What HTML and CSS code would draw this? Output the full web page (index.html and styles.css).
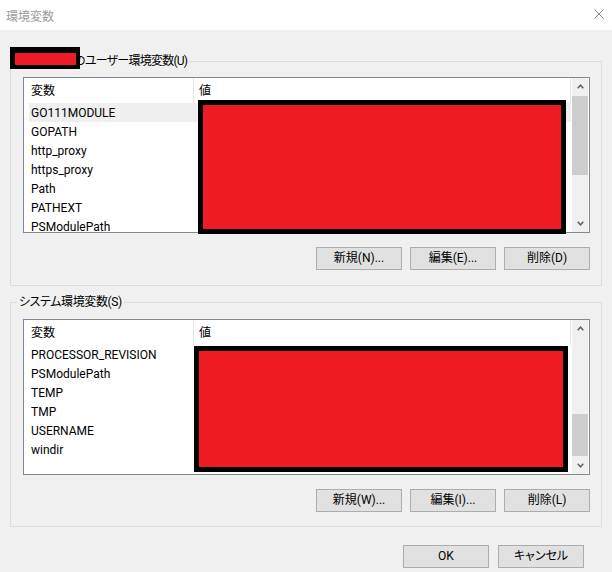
FILE: index.html
```html
<!DOCTYPE html>
<html lang="ja">
<head>
<meta charset="utf-8">
<title>環境変数</title>
<link rel="stylesheet" href="styles.css">
</head>
<body>
<div class="titlebar">
  <span class="title">環境変数</span>
  <svg class="close" width="10" height="10" viewBox="0 0 10 10"><path d="M0.5 0.5 L9.5 9.5 M9.5 0.5 L0.5 9.5" stroke="#8a8a8a" stroke-width="1" fill="none"/></svg>
</div>
<div class="content">
  <fieldset class="group group-user">
    <legend class="legend legend-user"><span class="user-space"></span><span class="redact redact-user"></span>のユーザー環境変数(U)</legend>
    <div class="list">
      <div class="list-main">
        <div class="list-head"><div class="head-cell head-name">変数</div><div class="head-cell head-value">値</div></div>
        <div class="rows">
          <div class="row selected">GO111MODULE</div>
          <div class="row">GOPATH</div>
          <div class="row">http_proxy</div>
          <div class="row">https_proxy</div>
          <div class="row">Path</div>
          <div class="row">PATHEXT</div>
          <div class="row">PSModulePath</div>
        </div>
      </div>
      <div class="scrollbar">
        <div class="sb-btn"><svg width="7" height="5" viewBox="0 0 7 5"><polyline points="0.7,4.2 3.5,1.2 6.3,4.2" fill="none" stroke="#606060" stroke-width="1.5"/></svg></div>
        <div class="sb-track"><div class="sb-thumb" style="margin-top:1px;height:79px"></div></div>
        <div class="sb-btn"><svg width="7" height="5" viewBox="0 0 7 5"><polyline points="0.7,0.8 3.5,3.8 6.3,0.8" fill="none" stroke="#606060" stroke-width="1.5"/></svg></div>
      </div>
      <div class="redact redact-values-user"></div>
    </div>
    <div class="btn-row">
      <button class="btn">新規(N)...</button>
      <button class="btn">編集(E)...</button>
      <button class="btn">削除(D)</button>
    </div>
  </fieldset>

  <fieldset class="group group-system">
    <legend class="legend">システム環境変数(S)</legend>
    <div class="list">
      <div class="list-main">
        <div class="list-head"><div class="head-cell head-name">変数</div><div class="head-cell head-value">値</div></div>
        <div class="rows">
          <div class="row">PROCESSOR_REVISION</div>
          <div class="row">PSModulePath</div>
          <div class="row">TEMP</div>
          <div class="row">TMP</div>
          <div class="row">USERNAME</div>
          <div class="row">windir</div>
        </div>
      </div>
      <div class="scrollbar">
        <div class="sb-btn"><svg width="7" height="5" viewBox="0 0 7 5"><polyline points="0.7,4.2 3.5,1.2 6.3,4.2" fill="none" stroke="#606060" stroke-width="1.5"/></svg></div>
        <div class="sb-track"><div class="sb-thumb" style="margin-top:77px;height:42px"></div></div>
        <div class="sb-btn"><svg width="7" height="5" viewBox="0 0 7 5"><polyline points="0.7,0.8 3.5,3.8 6.3,0.8" fill="none" stroke="#606060" stroke-width="1.5"/></svg></div>
      </div>
      <div class="redact redact-values-system"></div>
    </div>
    <div class="btn-row">
      <button class="btn">新規(W)...</button>
      <button class="btn">編集(I)...</button>
      <button class="btn">削除(L)</button>
    </div>
  </fieldset>

  <div class="dialog-buttons">
    <button class="btn">OK</button>
    <button class="btn">キャンセル</button>
  </div>
</div>
</body>
</html>
```

FILE: styles.css
```css
* { box-sizing: border-box; }
html, body { margin: 0; padding: 0; }
body {
  width: 612px;
  height: 572px;
  overflow: hidden;
  background: #f0f0f0;
  font-family: Roboto, "Noto Sans CJK JP", sans-serif;
  font-size: 12px;
  color: #000;
  font-feature-settings: "palt";
}
.titlebar {
  height: 30px;
  background: #fff;
  display: flex;
  align-items: center;
  justify-content: space-between;
  padding: 0 8px 0 6px;
}
.title {
  color: #9c9c9c;
  font-family: "Noto Sans CJK JP", sans-serif;
  font-size: 12px;
}
.close { margin-top: -2px; }
.content { padding-top: 23px; }

.group {
  margin: 0 10px;
  border: 1px solid #dcdcdc;
  padding: 8px 11px 15px 12px;
  min-width: 0;
}
.group-system {
  margin-top: 8px;
  padding: 9px 11px 14px 12px;
}
.legend {
  position: relative;
  padding: 0 2px;
  margin-left: -6px;
  line-height: 16px;
  height: 16px;
  letter-spacing: -0.4px;
}
.legend-user { letter-spacing: -0.75px; }
.user-space {
  display: inline-block;
  width: 55px;
  height: 1px;
}
.redact {
  position: absolute;
  background: #ed1c24;
  border: 5px solid #000;
}
.redact-user {
  left: -7px;
  top: -6px;
  width: 70px;
  height: 22px;
  border-width: 6px 4px 4px 5px;
}
.list {
  position: relative;
  height: 156px;
  border: 1px solid #828790;
  background: #fff;
  display: flex;
}
.list-main {
  flex: 1;
  min-width: 0;
  display: flex;
  flex-direction: column;
  overflow: hidden;
}
.list-head {
  height: 25px;
  display: flex;
  flex-shrink: 0;
}
.head-cell {
  padding-top: 1px;
  line-height: 24px;
  border-right: 1px solid #e5e5e5;
}
.head-name { width: 170px; padding-left: 7px; }
.head-value { flex: 1; padding-left: 5px; }
.rows { padding-left: 5px; }
.row {
  height: 19px;
  padding-top: 2px;
  padding-left: 2px;
  line-height: 17px;
  white-space: nowrap;
}
.row.selected { background: #efefef; }

.scrollbar {
  width: 16px;
  margin: 0 1px;
  background: #f0f0f0;
  display: flex;
  flex-direction: column;
}
.sb-btn {
  height: 17px;
  flex-shrink: 0;
  display: flex;
  align-items: center;
  justify-content: center;
}
.sb-btn svg { display: block; }
.sb-track { flex: 1; }
.sb-thumb { background: #cdcdcd; }

.redact-values-user { left: 174px; top: 22px; width: 368px; height: 134px; }
.redact-values-system { left: 170px; top: 26px; width: 374px; height: 126px; }

.btn-row {
  display: flex;
  justify-content: flex-end;
  gap: 8px;
  margin-top: 14px;
}
.btn {
  width: 86px;
  height: 23px;
  padding: 0;
  background: #e1e1e1;
  border: 1px solid #adadad;
  border-radius: 0;
  font: inherit;
  color: #000;
  line-height: 21px;
}
.dialog-buttons {
  display: flex;
  justify-content: flex-end;
  gap: 9px;
  margin-top: 18px;
  padding-right: 28px;
}
```
